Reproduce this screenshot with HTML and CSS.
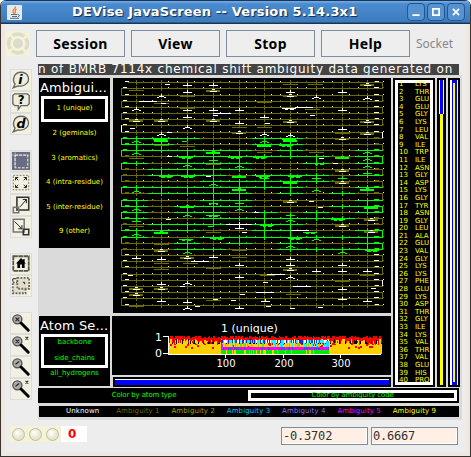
FILE: index.html
```html
<!DOCTYPE html>
<html lang="en">
<head>
<meta charset="utf-8">
<title>DEVise JavaScreen</title>
<link rel="stylesheet" href="styles.css">
</head>
<body>
<div class="window">
  <header class="titlebar">
    <svg class="java" viewBox="0 0 15 15"><rect width="15" height="15" rx="1" fill="#e9e8e5"/><path d="M8.5 1.5C9 4 5 4.500 6 7C6.500 8 7.500 8 7 9M9.500 4C7 5.500 9 6.500 8 8.500" fill="none" stroke="#e87820" stroke-width="1.200"/><path d="M4 9.500h6.500M5 11.500h5M3 13.300h9M11 9.500q3 .5 0 2.500" fill="none" stroke="#49718f"/></svg>
    <h1>DEVise JavaScreen -- Version 5.14.3x1</h1>
    <div class="controls">
      <svg viewBox="0 0 18 18"><path d="M5 12.500h8" /></svg>
      <svg viewBox="0 0 18 18"><rect x="5.500" y="5.500" width="7" height="7"/></svg>
      <svg viewBox="0 0 18 18"><path d="M5.500 5.500l7 7m0-7l-7 7"/></svg>
    </div>
  </header>
  <nav class="menu">
    <svg class="logo" viewBox="0 0 24 25"><rect width="24" height="25" fill="#f4f2d7"/><circle cx="12" cy="12.500" r="9.500" fill="none" stroke="#dddccb" stroke-width="3.500" stroke-dasharray="12.500 2.420" stroke-dashoffset="6"/><circle cx="12" cy="12.500" r="5" fill="#dddccb"/></svg>
    <button>Session</button><button>View</button><button>Stop</button><button>Help</button>
    <span class="socket">Socket</span>
  </nav>
  <div class="body">
    <aside class="tools">
      <svg viewBox="0 0 22 22"><path class="bub" d="M2.500 19.500l2-4C1 11 3 2.500 11 2.500s10.500 8 6 12.500c-3 3-6 3-9 2.500z"/><text x="8" y="15">i</text></svg>
      <svg viewBox="0 0 22 22"><path class="bub" d="M4 2h14l2 2v9l-2 2h-7l-3 4v-4H4l-2-2V4z"/><text class="q" x="7.500" y="13">?</text></svg>
      <svg viewBox="0 0 22 22"><path class="bub" d="M2.500 19.500l2-4C1 11 3 2.500 11 2.500s10.500 8 6 12.500c-3 3-6 3-9 2.500z"/><text x="6" y="15">d</text></svg>
      <svg class="gap" viewBox="0 0 22 22"><rect x="1" y="1" width="20" height="20" fill="#686d7f"/><path d="M1 4.500h19M4.500 1v17" stroke="#aaafb8" fill="none"/><rect x="4.500" y="4.500" width="14" height="14" class="dashw"/></svg>
      <svg viewBox="0 0 22 22"><rect x="2.500" y="2.500" width="17" height="16" class="dash"/><path class="arrow" d="M8 8L5 5m0 3V5h3M14 8l3-3m-3 0h3v3M8 13l-3 3m0-3v3h3M14 13l3 3m-3 0h3v-3"/></svg>
      <svg viewBox="0 0 22 22"><rect x="6.500" y="2.500" width="13" height="14" class="box"/><rect x="2.500" y="13.500" width="6" height="6" class="box thin"/><path class="arrow" d="M10 13l7-8m-4 0h4v4"/></svg>
      <svg viewBox="0 0 22 22"><rect x="2.500" y="2.500" width="12" height="14" class="box thin"/><rect x="13.500" y="13.500" width="6" height="6" class="box"/><path class="arrow" d="M4 5l8 8m-4 0h4V9"/></svg>
      <svg class="gap" viewBox="0 0 22 22"><rect x="2.500" y="2.500" width="17" height="16" class="dash frame"/><path d="M11 4.500l-5.500 6h1.500v5h3v-4h2v4h3v-5h1.500l-1.500-1.500V5.500h-1.500v1.500z"/></svg>
      <svg viewBox="0 0 22 22"><rect x="2" y="7" width="14" height="12" class="dash fat"/><rect x="7" y="2" width="13" height="12" class="dash fat"/><path class="arrow" d="M2 6V3h4M13 7h2v2"/></svg>
      <svg class="gap mag" viewBox="0 0 22 22"><circle cx="7" cy="7" r="5"/><path class="handle" d="M11 11l8 8"/><path class="sign" d="M5 5l4 4m0-4L5 9"/></svg>
      <svg class="mag" viewBox="0 0 22 22"><circle cx="7" cy="7" r="5"/><path class="handle" d="M11 11l8 8"/><path class="sign" d="M5 5l4 4m0-4L5 9M16 2l3 3m0-3l-3 3"/></svg>
      <svg class="mag" viewBox="0 0 22 22"><circle cx="7" cy="7" r="5"/><path class="handle" d="M11 11l8 8"/><path class="sign" d="M5 8l4-3"/></svg>
      <svg class="mag" viewBox="0 0 22 22"><circle cx="7" cy="7" r="5"/><path class="handle" d="M11 11l8 8"/><path class="sign" d="M5 8l4-3M16 2l3 3m0-3l-3 3"/></svg>
    </aside>
    <main>
      <div class="marquee"><span>n of BMRB 7114x chemical shift ambiguity data generated on</span></div>
      <div class="board">
        <div class="views">
          <div class="col left">
            <section class="ambig">
              <h2>Ambigui...</h2>
              <ul><li class="sel">1 (unique)</li><li>2 (geminals)</li><li>3 (aromatics)</li><li>4 (intra-residue)</li><li>5 (inter-residue)</li><li>9 (other)</li></ul>
            </section>
            <section class="atoms">
              <h2>Atom Se...</h2>
              <div class="pair"><p>backbone</p><p>side_chains</p></div>
              <p>all_hydrogens</p>
            </section>
          </div>
          <div class="col mid">
            <svg id="backbone" width="278" height="235" viewBox="113 78 278 235"></svg>
            <svg id="histogram" width="279" height="59" viewBox="112 316 279 59">
              <g id="bars"></g>
              <path d="M168.500 336v18M163 336.500h5M163 353.500h5M168 354.500h213M225.500 354v4M283.500 354v4M340.500 354v4" stroke="#fff" fill="none"/>
              <text x="221" y="332">1 (unique)</text>
              <text x="155" y="341">1</text><text x="155" y="357">0</text>
              <text class="tick" x="226" y="367">100</text><text class="tick" x="284" y="367">200</text><text class="tick" x="341" y="367">300</text>
            </svg>
            <div class="scroll"><i></i></div>
          </div>
          <ol class="seq" id="seq"></ol>
          <div class="range one"><i></i><b></b></div>
          <div class="range two"><i></i></div>
        </div>
        <div class="modes"><span>Color by atom type</span><span class="on">Color by ambiguity code</span></div>
        <div class="legend"><span class="u">Unknown</span><span class="a1">Ambiguity 1</span><span class="a2">Ambiguity 2</span><span class="a3">Ambiguity 3</span><span class="a4">Ambiguity 4</span><span class="a5">Ambiguity 5</span><span class="a9">Ambiguity 9</span></div>
      </div>
    </main>
  </div>
  <footer>
    <div class="lamps"><i></i><i></i><i></i></div><b class="count">0</b>
    <output>-0.3702</output><output>0.6667</output>
  </footer>
</div>
<script src="script.js"></script>
</body>
</html>
```
FILE: styles.css
```css
* { box-sizing: border-box; }
body { margin: 0; font-family: "DejaVu Sans", sans-serif; background: #fff; }
h1, h2, p, ul, ol { margin: 0; padding: 0; list-style: none; font-weight: normal; }
.window { width: 471px; height: 457px; overflow: hidden; background: #ededed; border: 1px solid #39332f; border-top: 0; border-radius: 6px 6px 0 0; box-shadow: inset 4px 0 #eee8e1, inset -4px -4px #eee8e1; display: flex; flex-direction: column; }
.titlebar { height: 24px; flex: none; background: linear-gradient(#1d3556 0 1px, #77afe8 1px, #4a8bd0 4px, #3d7bbd 22px, #173657 23px); display: flex; align-items: center; padding: 0 0 0 6px; }
.java { width: 15px; height: 15px; }
h1 { flex: 1; color: #fff; font: bold 13px/24px "DejaVu Sans", sans-serif; text-shadow: 1px 1px 1px #122d4c; white-space: nowrap; letter-spacing: .17px; padding-left: 50px; }
.controls { display: flex; gap: 2px; margin-right: 5px; }
.controls svg { width: 18px; height: 18px; border: 1px solid #24558c; border-radius: 4px; background: #5592d1; fill: none; stroke: #fff; stroke-width: 2; }
.menu { height: 40px; flex: none; padding: 6px 0 0 5px; display: flex; gap: 6px; }
.logo { width: 24px; height: 25px; margin-top: 1px; }
.menu button { width: 89px; height: 27px; padding: 0; border: 1px solid #7c8d9e; background: #eee; font: bold 14px/24px "Noto Sans", sans-serif; letter-spacing: .3px; color: #000; }
.socket { font: 12px/27px "Noto Sans", sans-serif; color: #888; }
.body { display: flex; height: 356px; flex: none; }
.tools { width: 22px; margin: 5px 6px 0 9px; display: flex; flex-direction: column; }
.tools svg { width: 22px; height: 22px; flex: none; background: #f1f0e1; border: 1px solid #ddd; }
.tools .gap { margin-top: 15px; }
.tools text { font: italic bold 14px "DejaVu Sans", sans-serif; }
.tools text.q { font-style: normal; font-size: 13px; }
.bub { fill: #eeedde; stroke: #66675e; stroke-width: 1.5; }
.dash { fill: none; stroke: #66665a; stroke-dasharray: 2 1.5; }
.dash.fat { stroke-width: 2; fill: #e2dfcc; }
.dash.frame { stroke: #55554a; stroke-width: 2; stroke-dasharray: 5 .6; }
.dashw { fill: none; stroke: #fff; stroke-dasharray: 3 1.5; }
.box { fill: none; stroke: #333; stroke-width: 1.7; }
.box.thin { stroke: #777; }
.arrow { fill: none; stroke: #222; stroke-width: 1.1; }
.mag circle { fill: #aaa; stroke: #555; stroke-width: 1.5; }
.handle { stroke: #000; stroke-width: 3.2; stroke-linecap: round; }
.sign { stroke: #222; stroke-width: 1.2; fill: none; }
.marquee { width: 421px; height: 11px; background: #434343; color: #fff; overflow: hidden; white-space: nowrap; }
.marquee span { display: block; font: 12px/11px "DejaVu Sans", sans-serif; letter-spacing: .77px; }
.board { width: 424px; height: 345px; background: #dadada; padding: 3px 0 0 1px; }
.views { display: flex; height: 309px; }
.col { display: flex; flex-direction: column; }
.left { width: 71px; margin-right: 3px; }
.left section { background: #000; }
h2 { color: #fff; font: 13px/20px "DejaVu Sans", sans-serif; height: 18px; white-space: nowrap; padding-left: 1px; letter-spacing: .1px; }
.ambig { height: 170px; }
.ambig ul { color: #ff0; }
.ambig li, .left p { font-size: 7px; text-align: center; white-space: nowrap; }
.ambig li { height: 24.6px; line-height: 23px; }
.ambig .sel { height: 26px; line-height: 19px; margin: 0 2px; border: 3px solid #fff; }
.atoms { height: 70px; margin-top: 68px; color: #0f0; }
.pair { height: 34px; margin: 0 2px; border: 3px solid #fff; }
.left p { line-height: 10px; }
.pair p + p { margin-top: 6px; }
.mid { width: 278px; margin-right: 2px; }
#backbone { background: #000; shape-rendering: crispEdges; }
#histogram { background: #000; margin: 3px 0 2px -1px; }
#bars { shape-rendering: crispEdges; }
#histogram text { fill: #fff; font: 11px "DejaVu Sans", sans-serif; }
#histogram .tick { font-size: 10px; text-anchor: middle; }
.scroll { height: 10px; background: #000; padding: 2px; }
.scroll i { display: block; height: 6px; background: #00f; border-top: 1px solid #fff; }
.seq { width: 42px; height: 309px; margin-right: 2px; background: #000; border: 2px solid #000; box-shadow: inset 0 0 0 3px #fff; color: #ff0; font: 7px/8px "DejaVu Sans", sans-serif; display: grid; grid-template-rows: repeat(40, 7.6px); overflow: hidden; }
.seq li { display: flex; height: 8px; margin: 0 0 0 4px; }
.seq span { width: 16px; }
.range { height: 309px; background: #000; padding: 2px; margin-right: 2px; }
.range i, .range b { display: block; }
.one { width: 9px; }
.one i { height: 34px; background: #00f; border: solid #fff; border-width: 0 1px; }
.one b { height: 271px; background: #ff0; margin: 0 1px; }
.two { width: 12px; margin: 0; }
.two i { height: 305px; border: solid #fff; border-width: 0 1px 0 2px; background: linear-gradient(#ff0, #ff0) 1px 3px / 2px 299px no-repeat #00f; }
.modes { width: 421px; height: 15px; margin: 1px 0 3px -1px; padding: 2px; background: #000; color: #0f0; font: 7px/11px "DejaVu Sans", sans-serif; letter-spacing: -.15px; display: flex; text-align: center; }
.modes span { width: 208px; height: 11px; }
.modes .on { width: 209px; border: 3px solid #fff; line-height: 5px; }
.legend { width: 420px; height: 11px; background: #000; font: 7px/11px "DejaVu Sans", sans-serif; display: flex; padding-left: 16px; text-align: center; }
.legend span { width: 55.3px; white-space: nowrap; letter-spacing: .1px; }
.u { color: #fff; } .a1 { color: #6b6b00; } .a2 { color: #a3a300; } .a3 { color: #00c8ff; } .a4 { color: #9370ff; } .a5 { color: #f0f; } .a9 { color: #ff0; }
footer { display: flex; padding: 6px 0 0 9px; }
.lamps { width: 51px; height: 16px; background: #f4f2d7; display: flex; gap: 4px; align-items: center; padding: 0 2px; }
.lamps i { width: 13px; height: 13px; border-radius: 50%; border: 1px solid #bebda5; background: radial-gradient(circle at 40% 35%, #fff, #e6e4ca 60%); }
.count { width: 26px; height: 16px; background: #fff; color: #f00; font: bold 12px/16px "DejaVu Sans", sans-serif; padding-left: 7px; margin-right: 194px; }
output { width: 87px; height: 18px; margin: 1px 3px 0 0; border: 1px solid #7c8d9e; box-shadow: inset -1px -1px #fff; background: #ffefe5; font: 12px/17px "DejaVu Sans Mono", monospace; letter-spacing: -.2px; padding-left: 1px; color: #333; }
```
FILE: script.js
```js
const NS = "http://www.w3.org/2000/svg";
function box(parent, x, y, w, h, fill) {
  const r = document.createElementNS(NS, "rect");
  for (const [k, v] of Object.entries({ x, y, width: w, height: h, fill })) r.setAttribute(k, v);
  parent.appendChild(r);
}

const names = "LYS THR GLU GLU GLY LYS LEU VAL ILE TRP ILE ASN GLY ASP LYS GLY TYR ASN GLY LEU ALA GLU VAL GLY LYS LYS PHE GLU LYS ASP THR GLY ILE LYS VAL THR VAL GLU HIS PRO".split(" ");
document.getElementById("seq").innerHTML = names.map((n, i) => `<li><span>${i + 1}</span>${n}</li>`).join("");

/* Backbone trace: serpentine rows, one character per residue cell. */
const plot = document.getElementById("backbone");
const C = { o: "#6c6c00", g: "#00ff00", w: "#ffffff" };
const ys = [82,88,95,101,107,113,119,125,132,138,144,150,156,163,169,175,181,187,193,200,206,212,218,224,230,237,243,249,255,261,267,274,280,286,292,298,305];
const edge = [121,148,174,200,226,252,277,303,329,355,383];
const spine = [136,161,187,213,239,264,290,316,342,367];
const green = { 9:"gggooggooo", 10:"ggoooggooo", 11:"gggggogoog", 12:"ooggggggog", 13:"gogggoogog", 14:"oggggooooo", 15:"ogggogggog", 16:"ooogggggoo", 17:"gggggggoog", 18:"oggggogogo", 19:"googgoooog", 20:"gogggooogg", 21:"goggogogog", 22:"googgggggo", 23:"ogggwggooo", 24:"gggooggoog", 25:"googgggggg", 26:"oogogogoog", 27:"ooggoogggg" };
ys.forEach((y, i) => {
  const row = green[i] || "oooooooooo";
  for (let k = 0; k < 10; k++) {
    box(plot, edge[k], y, edge[k + 1] - edge[k], 1, C[row[k]]);
    const s = spine[k];
    const next = green[i + 1] ? green[i + 1][k] : "o";
    box(plot, s, y - 2, 1, 5, C[row[k]]);
    if (row[k] === "g" && next === "g") box(plot, s, y, 1, 6, C.g);
    const lit = row[k] === "g" ? C.g : C.w;
    box(plot, s + 7, y - 1, 1, 1, (i + k) % 3 ? lit : C.o);
    box(plot, s + 16, y - 1, 1, 1, (i + k) % 2 ? lit : C.o);
  }
  if (i < 36) {
    const right = i % 2 === 0, k = right ? 9 : 0;
    const white = i === 7 || i === 8 || i === 32;
    box(plot, right ? 382 : 121, y, 1, ys[i + 1] - y + 1, white ? C.w : C[row[k]]);
  }
  box(plot, i % 2 ? 123 : 125, y - 1, 4, 1, green[i] ? C[row[0]] : C.w);
  box(plot, 375, y - 1, 4, 1, green[i] ? C[row[9]] : C.w);
});
box(plot, 121, 82, 7, 1, "#000");

/* Side chains: c = caret, t = inverted T, b/s/l = dashes, r = ring, u = cup. */
function mark(kind, x, y, col) {
  const c = C[col];
  if (kind === "b") box(plot, x - 7, y, 15, 1, c);
  if (kind === "s") box(plot, x - 2, y, 5, 1, c);
  if (kind === "l") box(plot, x - 9, y, 18, 1, c);
  if (kind === "t") { box(plot, x - 4, y, 9, 1, c); box(plot, x, y - 2, 1, 2, c); }
  if (kind === "c") { box(plot, x - 2, y - 1, 5, 1, c); box(plot, x - 4, y, 2, 1, c); box(plot, x + 3, y, 2, 1, c); box(plot, x, y - 3, 1, 2, c); }
  if (kind === "r") { box(plot, x - 7, y - 1, 14, 2, col === "w" ? C.o : c); box(plot, x - 3, y, 7, 1, c); box(plot, x - 1, y - 2, 3, 1, c); }
  if (kind === "u") { box(plot, x - 8, y, 14, 1, c); box(plot, x - 5, y + 1, 3, 1, c); box(plot, x, y + 1, 4, 1, c); }
}
const marks = `s 167 84 w|t 187 85 w|t 213 85 w|b 136 90 o|t 187 92 w|r 213 91 w|b 187 96 o|b 213 101 o|c 161 97 w|l 148 101 w|b 161 103 o|s 163 103 w|c 136 110 w|t 187 110 w|t 213 110 w|b 187 108 o|t 239 110 w|l 222 113 w|s 215 115 w|r 161 121 w|r 136 121 w|r 213 121 w|t 187 117 w|t 239 123 w|c 187 128 w|b 239 127 o|s 132 128 w|c 161 135 w|s 169 132 w|r 239 133 w|u 161 139 g|r 161 141 g|c 136 142 g|s 184 141 g|b 187 146 o|b 161 145 o|c 136 154 g|r 213 153 g|u 187 157 g|u 236 157 g|s 169 156 w|b 136 158 o|t 213 160 g|c 187 166 g|b 213 164 o|c 239 167 g|u 167 176 g|u 189 176 g|r 239 177 g|s 208 176 w|c 213 185 g|r 239 190 g|c 136 192 g|b 290 84 o|b 315 84 o|r 367 85 w|t 290 92 w|t 342 92 w|r 290 96 w|c 316 98 w|c 367 99 w|b 264 102 o|u 290 108 w|l 304 107 w|b 312 109 o|t 342 110 w|s 312 115 w|t 264 117 w|s 267 123 w|r 290 122 w|r 367 122 w|b 264 127 o|t 342 129 w|c 264 135 w|c 290 136 w|r 367 134 w|b 342 133 o|u 290 139 g|r 290 141 g|r 342 139 w|c 264 142 g|r 264 146 g|u 287 145 g|b 264 152 o|b 316 152 o|u 261 157 g|r 342 158 g|s 321 158 w|c 367 153 g|u 320 163 g|s 335 163 w|c 367 160 g|c 367 167 g|r 342 171 w|u 264 176 g|u 296 176 g|t 264 178 g|t 316 178 g|t 342 178 g|t 367 173 g|r 290 183 g|r 342 183 w|c 316 191 g|r 367 190 g|t 213 203 g|t 239 203 g|r 290 202 w|s 311 201 w|c 136 210 g|r 187 207 g|c 213 204 g|c 239 210 g|s 320 207 w|r 371 208 g|c 187 216 g|u 214 215 g|s 256 212 w|t 290 215 g|t 136 221 g|s 168 219 w|u 339 219 g|r 371 220 w|c 290 221 g|b 136 226 o|s 210 226 g|l 239 224 w|t 239 228 w|u 268 225 g|r 342 226 w|r 161 233 g|c 136 235 g|b 213 232 o|s 244 232 w|l 300 230 w|u 311 232 g|r 371 232 w|u 187 239 g|u 218 238 g|u 296 238 g|c 316 240 g|b 161 244 o|c 290 247 g|b 239 250 o|r 161 251 w|c 187 253 g|c 342 253 g|u 373 250 g|t 136 258 w|t 161 259 w|r 187 258 w|t 213 257 w|b 239 257 o|t 290 259 w|l 200 261 w|b 190 263 o|b 161 263 o|t 239 265 w|b 213 268 o|t 290 265 w|t 342 265 w|b 161 269 o|r 290 270 w|t 316 271 w|t 342 271 w|t 367 271 w|s 130 275 w|b 267 275 o|l 276 274 w|t 239 277 w|c 290 278 w|b 367 275 o|t 161 284 w|c 187 284 w|s 265 282 w|b 342 281 o|r 136 289 w|r 161 289 w|l 302 286 w|s 182 286 w|t 342 289 w|s 373 288 w|r 136 295 w|l 265 292 w|s 215 299 w|s 242 294 w|b 293 294 o|t 342 299 w|t 161 301 w|b 213 300 o|t 187 302 w|t 265 301 w|t 367 301 w|s 233 300 w|b 136 306 o|s 197 306 w|t 239 308 w|c 187 309 w|s 268 306 w|s 292 308 w|s 320 307 w`;
marks.split("|").forEach(m => { const [k, x, y, c] = m.split(" "); mark(k, +x, +y, c); });

/* Stacked ambiguity counts along the sequence. */
const bars = document.getElementById("bars");
let seed = 17;
const rnd = () => (seed = (seed * 16807) % 2147483647) / 2147483647;
box(bars, 168, 342, 214, 12, "#ffd000");
for (let x = 168; x < 382; x += 1) {
  const top = 336 + Math.floor(rnd() * 3), h = 3 + Math.floor(rnd() * 5);
  box(bars, x, 338, 1, 6, rnd() < .38 ? "#000" : "#ffd000");
  box(bars, x, top, rnd() < .4 ? 2 : 1, rnd() < .5 ? 3 : h, "#ff0000");
  if (rnd() < .35) box(bars, x, 341 + Math.floor(rnd() * 7), 2, 2, "#ff0000");
}
for (let x = 221; x < 329; x += 1) {
  const r = rnd();
  box(bars, x, 340, 1, 3, r < .4 ? "#00ffff" : r < .75 ? "#0030ff" : "#ffffff");
  if (rnd() < .35) box(bars, x, 343, 1, 4, rnd() < .5 ? "#00ffff" : "#70e000");
  box(bars, x, 347, 1, 3, rnd() < .7 ? "#ff00ff" : "#7030ff");
  if (rnd() < .8) box(bars, x, 350, 1, 4, "#00e800");
}
box(bars, 221, 344, 2, 6, "#b030ff");
box(bars, 326, 341, 3, 6, "#00e8ff");
```
